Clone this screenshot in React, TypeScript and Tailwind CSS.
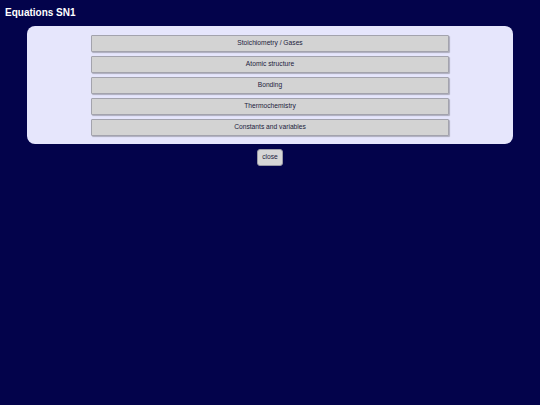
const sections = [
  "Stoichiometry / Gases",
  "Atomic structure",
  "Bonding",
  "Thermochemistry",
  "Constants and variables",
];

export default function App() {
  return (
    <div
      className="h-[405px] w-[540px] bg-[#03034b] text-[#1c1c3c]"
      style={{ fontFamily: '"Liberation Sans", Arial, sans-serif' }}
    >
      <h1 className="px-[5px] pt-[7px] text-[10px] font-bold leading-[12px] text-white">
        Equations SN1
      </h1>

      <div className="mx-[27px] mt-[7px] flex flex-col items-center gap-[4px] rounded-[8px] bg-[#e6e6fc] pt-[9px] pb-[8px]">
        {sections.map((label) => (
          <button
            key={label}
            className="flex h-[17px] w-[358px] items-center justify-center rounded-[1px] border border-[#a3a3ad] bg-[#d3d3d3] text-[6.7px] text-[#1c1c3c] shadow-[1px_1px_1px_rgba(0,0,0,0.25)]"
          >
            {label}
          </button>
        ))}
      </div>

      <div className="mt-[5px] flex justify-center">
        <button className="flex h-[17px] w-[26px] items-center justify-center rounded-[3px] border border-[#9a9aa6] bg-[#d6d6d6] text-[6.7px] text-[#1c1c3c]">
          close
        </button>
      </div>
    </div>
  );
}
